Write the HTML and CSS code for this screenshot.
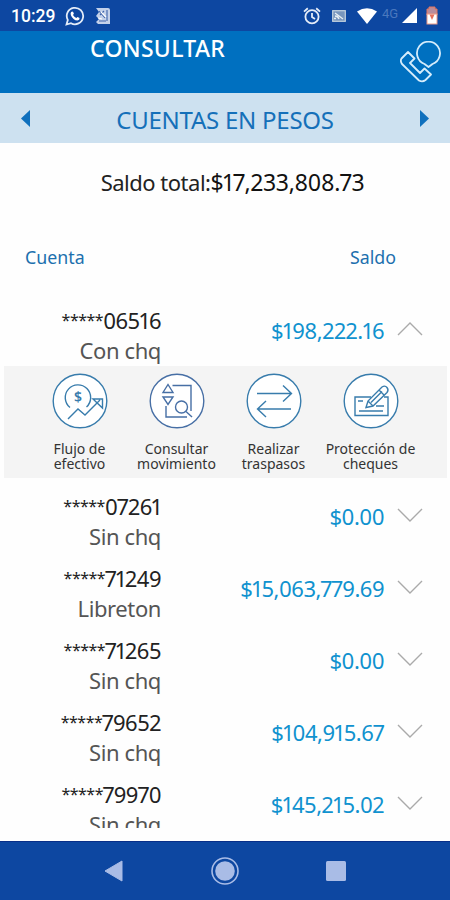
FILE: index.html
```html
<!DOCTYPE html>
<html lang="es">
<head>
    <meta charset="UTF-8">
    <meta name="viewport" content="width=device-width, initial-scale=1.0">
    <title>Consultar - Cuentas en pesos</title>
    <link rel="stylesheet" href="styles.css">
</head>
<body>
    <div class="status-bar">
        <span class="clock">10:29</span>
        <svg class="whatsapp" width="20" height="20" viewBox="0 0 20 20">
            <path d="M1.5 18.5 L2.8 14 A8.2 8.2 0 1 1 6 17.2 Z" fill="none" stroke="#e4ecf8" stroke-width="1.8"/>
            <path d="M6 6.2 Q7.3 4.6 8.3 6.2 L8.9 7.7 L8 9 Q9.2 11.2 11.3 12 L12.5 10.9 L14.6 12 Q14.8 14.2 12.5 14.6 Q8 14.2 5.9 9.2 Q5.3 7.4 6 6.2Z" fill="#fff"/>
        </svg>
        <svg class="sim" width="16" height="18" viewBox="0 0 16 18">
            <path d="M1 1 H13 Q15 1 15 3 V17 H3 L1 15 L4 12 L1 9 L4 5 Z" fill="#c3d1ea"/>
            <path d="M4 4 L10 11 M9 4 L5 8 M12 3 V14 M4 14 H11" fill="none" stroke="#3f65ac" stroke-width="1.1"/>
            <path d="M6 5 L11 10 M3 11 L7 12" stroke="#fff" stroke-width="1.2"/>
        </svg>
        <div class="status-right">
            <svg class="alarm" width="18" height="18" viewBox="0 0 18 18" fill="none" stroke="#e4ecf8" stroke-width="1.8">
                <circle cx="9" cy="9.7" r="6.6"/>
                <path d="M1 4.6 L4.8 1.3 M17 4.6 L13.2 1.3 M9 6 V10 L12 12"/>
            </svg>
            <svg class="cast" width="14" height="12" viewBox="0 0 14 12">
                <rect x="0.7" y="0.7" width="12.6" height="10.6" fill="#7896bd" stroke="#c5d3df" stroke-width="1.2"/>
                <path d="M3 3 L11 9 M3 6 Q6 6 7 9 M2 8.5 H4" fill="none" stroke="#e9f0f4" stroke-width="1.3"/>
            </svg>
            <svg class="wifi" width="20" height="16" viewBox="0 0 20 16">
                <path d="M0 3.5 Q10 -3 20 3.5 L10 16 Z" fill="#fff"/>
            </svg>
            <span class="network">4G</span>
            <svg class="signal" width="15" height="15" viewBox="0 0 15 15">
                <path d="M15 0 V15 H0 Z" fill="#fff"/>
            </svg>
            <svg class="battery" width="12" height="19" viewBox="0 0 12 19">
                <path d="M3 3 V1 H9 V3 H11 V9 H1 V3 Z" fill="#b98c9c" stroke="#e5765f" stroke-width="1"/>
                <rect x="1" y="8" width="10" height="10" fill="#fff" stroke="#ef9a84" stroke-width="1"/>
                <path d="M3.5 8.5 H8.500 L6 14 Z" fill="#e6705c"/>
            </svg>
        </div>
    </div>

    <header class="header">
        <h1>CONSULTAR</h1>
        <svg class="phone" width="42" height="42" viewBox="0 0 42 42" fill="none" stroke="#d5ecfb" stroke-width="1.8" stroke-linejoin="round">
            <path d="M24.5 23 A11.5 11.5 0 1 1 32.5 23 L28.5 26 Z"/>
            <path d="M8 11 L1.5 17.5 Q0 20 2 23 L19 39.5 Q22.5 41.5 25.5 39 L31 33.5 L24.5 27.5 L20 32 L10 22 L14.5 17.5 Z"/>
        </svg>
    </header>

    <div class="account-type">
        <svg width="9" height="17" viewBox="0 0 9 17"><path d="M9 0 V17 L0 8.5 Z" fill="#0f70bd"/></svg>
        <h2>CUENTAS EN PESOS</h2>
        <svg width="9" height="17" viewBox="0 0 9 17"><path d="M0 0 V17 L9 8.5 Z" fill="#0f70bd"/></svg>
    </div>

    <main class="content">
        <p class="total"><span class="total-label">Saldo total:</span><span class="total-amount">$17,233,808.73</span></p>

        <div class="columns">
            <span>Cuenta</span>
            <span>Saldo</span>
        </div>

        <div class="list">
            <div class="row">
                <div class="account"><p class="number"><span class="mask">*****</span>06516</p><p class="kind">Con chq</p></div>
                <span class="amount">$198,222.16</span>
                <svg class="chevron" width="26" height="14" viewBox="0 0 26 14"><path d="M1 13 L13 1 L25 13"/></svg>
            </div>

            <div class="actions">
                <div class="action">
                    <svg class="icon" width="56" height="56" viewBox="0 0 56 56">
                        <circle class="ring" cx="28" cy="28" r="26.8"/>
                        <path d="M18 34.5 A12.7 12.7 0 1 1 34.5 34"/>
                        <path d="M16 46 L26 36 L33 42 L48 27 M41 26 L50.5 26 V35 Z"/>
                        <text x="26" y="29">$</text>
                    </svg>
                    <span>Flujo de<br>efectivo</span>
                </div>
                <div class="action action-movements">
                    <svg class="icon" width="56" height="56" viewBox="0 0 56 56">
                        <circle class="ring" cx="28" cy="28" r="26.8"/>
                        <path d="M23.5 12.5 H42 V38 M17 33 V44 H38"/>
                        <path d="M14 19.5 H24 L19 11.5 Z M14 24 H24 L19 31.5 Z"/>
                        <circle cx="32.5" cy="34" r="6"/>
                        <path d="M37 38.5 L43 44"/>
                    </svg>
                    <span>Consultar<br>movimiento</span>
                </div>
                <div class="action">
                    <svg class="icon" width="56" height="56" viewBox="0 0 56 56">
                        <circle class="ring" cx="28" cy="28" r="26.8"/>
                        <path d="M11 20.5 H45 M37 12.5 L45.5 20.5 L37 28.5"/>
                        <path d="M45 36 H12 M20 28 L11.5 36 L20 44"/>
                    </svg>
                    <span>Realizar<br>traspasos</span>
                </div>
                <div class="action action-checks">
                    <svg class="icon" width="56" height="56" viewBox="0 0 56 56">
                        <circle class="ring" cx="28" cy="28" r="26.8"/>
                        <path d="M28 24 H12 V42.5 H45 V24 H41"/>
                        <path d="M15 28 H20 M16 38 H40 M33 33 H41"/>
                        <path d="M23 34.5 L25 28 L39 14 Q42 12 44 14.5 Q46 17 44 19.5 L30 33 Z M25 28 L30 33 M36 17 L41.5 22.5 M28 29.5 L39 18.5"/>
                    </svg>
                    <span>Protección de<br>cheques</span>
                </div>
            </div>

            <div class="row">
                <div class="account"><p class="number"><span class="mask">*****</span>07261</p><p class="kind">Sin chq</p></div>
                <span class="amount">$0.00</span>
                <svg class="chevron" width="26" height="14" viewBox="0 0 26 14"><path d="M1 1 L13 13 L25 1"/></svg>
            </div>
            <div class="row">
                <div class="account"><p class="number"><span class="mask">*****</span>71249</p><p class="kind">Libreton</p></div>
                <span class="amount">$15,063,779.69</span>
                <svg class="chevron" width="26" height="14" viewBox="0 0 26 14"><path d="M1 1 L13 13 L25 1"/></svg>
            </div>
            <div class="row">
                <div class="account"><p class="number"><span class="mask">*****</span>71265</p><p class="kind">Sin chq</p></div>
                <span class="amount">$0.00</span>
                <svg class="chevron" width="26" height="14" viewBox="0 0 26 14"><path d="M1 1 L13 13 L25 1"/></svg>
            </div>
            <div class="row">
                <div class="account"><p class="number"><span class="mask">*****</span>79652</p><p class="kind">Sin chq</p></div>
                <span class="amount">$104,915.67</span>
                <svg class="chevron" width="26" height="14" viewBox="0 0 26 14"><path d="M1 1 L13 13 L25 1"/></svg>
            </div>
            <div class="row">
                <div class="account"><p class="number"><span class="mask">*****</span>79970</p><p class="kind">Sin chq</p></div>
                <span class="amount">$145,215.02</span>
                <svg class="chevron" width="26" height="14" viewBox="0 0 26 14"><path d="M1 1 L13 13 L25 1"/></svg>
            </div>
        </div>
    </main>

    <nav class="nav-bar">
        <svg width="30" height="30" viewBox="0 0 30 30"><path d="M23 5 V25 L6 15 Z" fill="#a9bce6" stroke="#a9bce6" stroke-linejoin="round"/></svg>
        <svg width="30" height="30" viewBox="0 0 30 30"><circle cx="15" cy="15" r="13" fill="none" stroke="#a9bce6" stroke-width="1.6"/><circle cx="15" cy="15" r="9.8" fill="#a9bce6"/></svg>
        <svg width="30" height="30" viewBox="0 0 30 30"><rect x="5" y="5" width="20" height="20" rx="1.5" fill="#a9bce6"/></svg>
    </nav>
</body>
</html>
```

FILE: styles.css
```css
* {
    box-sizing: border-box;
}
body {
    font-family: "Noto Sans", sans-serif;
    margin: 0;
    height: 900px;
    display: flex;
    flex-direction: column;
    background-color: #fefefe;
    color: #222;
    overflow: hidden;
}
h1, h2, p {
    margin: 0;
    font-weight: normal;
}
svg {
    display: block;
    flex: none;
}
.status-bar {
    height: 31px;
    flex: none;
    display: flex;
    align-items: center;
    padding: 0 12px 0 11px;
    background-color: #0d47a1;
    color: #fff;
}
.clock {
    width: 54px;
    font-family: Roboto, sans-serif;
    font-size: 17.5px;
    font-weight: 500;
}
.sim {
    margin-left: 10px;
}
.status-right {
    margin-left: auto;
    display: flex;
    align-items: center;
}
.cast {
    margin-left: 11px;
}
.wifi {
    margin-left: 11px;
}
.network {
    width: 17px;
    margin: -5px 3px 0 5px;
    font-family: Roboto, sans-serif;
    font-size: 13px;
    color: #4a78be;
}
.battery {
    margin-left: 9px;
}
.header {
    height: 62px;
    flex: none;
    display: flex;
    justify-content: space-between;
    padding: 0 8px 0 90px;
    background-color: #0070c0;
    color: #fff;
}
.header h1 {
    font-size: 23px;
    font-weight: 500;
    line-height: 34px;
    letter-spacing: 0.3px;
}
.phone {
    margin-top: 10px;
}
.account-type {
    height: 50px;
    flex: none;
    display: flex;
    align-items: center;
    justify-content: space-between;
    padding: 0 21px;
    background-color: #cde1f0;
    color: #1570b9;
}
.account-type h2 {
    font-size: 24px;
    line-height: 50px;
    letter-spacing: -0.25px;
    padding-top: 3px;
}
.content {
    flex: none;
    height: 698px;
}
.total {
    display: flex;
    justify-content: center;
    padding: 23px 0 0 15px;
    font-size: 22px;
    line-height: 32px;
}
.total-label {
    letter-spacing: -0.5px;
}
.total .total-amount {
    font-size: 23px;
    letter-spacing: -0.3px;
    color: #111;
}
.columns {
    display: flex;
    justify-content: space-between;
    padding: 44px 54px 0 25px;
    font-size: 17.8px;
    line-height: 30px;
    color: #1c70ae;
}
.list {
    height: 534px;
    margin-top: 22px;
    overflow: hidden;
}
.row {
    height: 72px;
    display: flex;
    padding-top: 11px;
}
.account {
    width: 161px;
    text-align: right;
    font-size: 22px;
    line-height: 30px;
}
.number, .amount, .total-amount {
    font-feature-settings: "pnum";
    letter-spacing: -0.5px;
}
.number {
    height: 30px;
}
.mask {
    font-size: 16px;
    line-height: 1;
    vertical-align: 3px;
}
.kind {
    letter-spacing: -0.4px;
    color: #555;
}
.amount {
    width: 223px;
    text-align: right;
    font-size: 22px;
    line-height: 50px;
    color: #1092cf;
}
.chevron {
    margin: 17px 0 0 13px;
    fill: none;
    stroke: #aaa;
    stroke-width: 1.4;
}
.actions {
    height: 112px;
    display: flex;
    margin: 0 3px 2px 4px;
    padding: 7px 0 0 27px;
    background-color: #f4f4f4;
}
.action {
    width: 97px;
    display: flex;
    flex-direction: column;
    align-items: center;
    font-size: 14px;
    line-height: 15px;
    text-align: center;
    color: #333;
}
.action span {
    margin-top: 12px;
    white-space: nowrap;
}
.icon {
    fill: none;
    stroke: #387cac;
    stroke-width: 1.4;
}
.ring {
    fill: #fff;
}
.icon text {
    font-size: 14px;
    font-weight: 600;
    text-anchor: middle;
    fill: #387cac;
    stroke: none;
}
.action-movements .icon {
    stroke: #476fa5;
}
.nav-bar {
    height: 59px;
    flex: none;
    display: flex;
    justify-content: center;
    align-items: center;
    gap: 81px;
    background-color: #0d47a1;
    border-top: 1px solid #082f88;
}
```
